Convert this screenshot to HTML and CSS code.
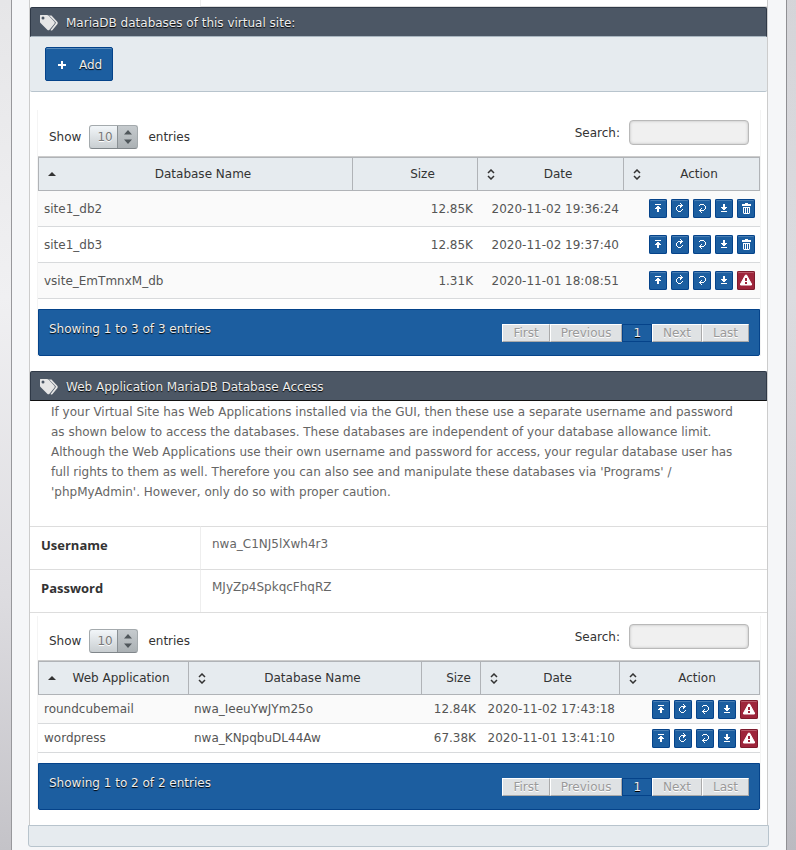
FILE: index.html
```
<!DOCTYPE html>
<html lang="en">

<head>
    <meta charset="UTF-8">
    <meta name="viewport" content="width=device-width, initial-scale=1.0">
    <title>MariaDB databases</title>
    <link rel="stylesheet" href="styles.css">
</head>

<body>
    <svg class="symbols" aria-hidden="true">
        <symbol id="tags" viewBox="0 0 18 16">
            <path d="M9 0.500h2.500l6 6.500q.5 1 0 2l-5 6q-1 1-2 0l5-6.500q.5-.7 0-1.500z" fill="#e6e6e6" />
            <path d="M.5 0h6.500q1 0 1.500.5l6 6.300q.7 1 0 2l-5 6q-1 1-2 .2L.5 8q-.5-.5-.5-1.500v-6q0-.5.5-.5z" fill="#e6e6e6" />
            <circle cx="3" cy="3" r="1.500" fill="#4c5765" />
        </symbol>
        <symbol id="top" viewBox="0 0 18 19">
            <path d="M6 5h6v1H6zM8 7h2v1h1v1h1v1h-2v3H8v-3H6V9h1V8h1z" fill="#fff" />
        </symbol>
        <symbol id="redo" viewBox="0 0 18 19">
            <path d="M9 4h1v1h1v1h1v1h-1v1h-1v1H9V7H7v1H6v3h1v1h3v-1h1v-1h1v1h-1v1h-1v1H7v-1H6v-1H5V8h1V7h1V6h3V5H9z" fill="#fff" />
        </symbol>
        <symbol id="undo" viewBox="0 0 18 19">
            <path d="M7 5h4v1h1v1h1v3h-1v1h-1v1H8v1h1v1H8v-1H7v-1H6v-1h1v-1h1V9h1v1H8v1h3v-1h1V7h-1V6H7v1H6V6h1z" fill="#fff" />
        </symbol>
        <symbol id="bottom" viewBox="0 0 18 19">
            <path d="M8 5h2v3h2v1h-1v1h-1v1H8v-1H7V9H6V8h2zM6 12h6v1H6z" fill="#fff" />
        </symbol>
        <symbol id="trash" viewBox="0 0 18 19">
            <path d="M8 4h3v1h3v2H5V5h3zM6 8h7v6l-1 1H7l-1-1zM8 9v4M9.500 9v4" fill="#fff" />
            <path d="M7.500 9v5M9.500 9v5M11.500 9v5" stroke="#1c5ea0" />
        </symbol>
        <symbol id="warn" viewBox="0 0 18 19">
            <path d="M8.500 4h1l5 9v1h-11v-1z" fill="#fff" stroke="#fff" stroke-linejoin="round" />
            <path d="M8 7h2v3H8zM8 11h2v2H8z" fill="#9e253b" />
        </symbol>
        <symbol id="both" viewBox="0 0 8 11">
            <path d="M1 4l3-3 3 3M1 7l3 3 3-3" fill="none" stroke="#333" stroke-width="1.500" />
        </symbol>
        <symbol id="asc" viewBox="0 0 8 11">
            <path d="M0 7L4 3l4 4z" fill="#333" />
        </symbol>
        <symbol id="spin" viewBox="0 0 8 16">
            <path d="M0 5.500L4 1l4 4.500zM0 10.500L4 15l4-4.500z" fill="#50575b" />
        </symbol>
        <symbol id="plus" viewBox="0 0 8 8">
            <path d="M3 0h2v3h3v2H5v3H3V5H0V3h3z" fill="#fff" />
        </symbol>
    </svg>

    <div class="page">
        <div class="panel">
            <div class="prev-row"></div>

            <h2><svg><use href="#tags" /></svg>MariaDB databases of this virtual site:</h2>
            <div class="toolbar">
                <button class="add"><svg><use href="#plus" /></svg>Add</button>
            </div>

            <div class="datatable first">
                <div class="controls">
                    <div class="length">
                        <label for="len1">Show</label>
                        <span class="select">
                            <select id="len1"><option>10</option><option>25</option></select>
                            <svg><use href="#spin" /></svg>
                        </span>
                        entries
                    </div>
                    <div class="search">
                        <label for="search1">Search:</label>
                        <input type="text" id="search1">
                    </div>
                </div>
                <table>
                    <colgroup>
                        <col>
                        <col class="w125">
                        <col class="w146">
                        <col class="w136">
                    </colgroup>
                    <thead>
                        <tr>
                            <th><svg><use href="#asc" /></svg>Database Name</th>
                            <th>Size</th>
                            <th><svg><use href="#both" /></svg>Date</th>
                            <th><svg><use href="#both" /></svg>Action</th>
                        </tr>
                    </thead>
                    <tbody>
                        <tr>
                            <td>site1_db2</td>
                            <td class="num">12.85K</td>
                            <td class="num">2020-11-02 19:36:24</td>
                            <td class="actions">
                                <div>
                                    <button aria-label="Upload"><svg><use href="#top" /></svg></button>
                                    <button aria-label="Refresh"><svg><use href="#redo" /></svg></button>
                                    <button aria-label="Restore"><svg><use href="#undo" /></svg></button>
                                    <button aria-label="Download"><svg><use href="#bottom" /></svg></button>
                                    <button aria-label="Delete"><svg><use href="#trash" /></svg></button>
                                </div>
                            </td>
                        </tr>
                        <tr>
                            <td>site1_db3</td>
                            <td class="num">12.85K</td>
                            <td class="num">2020-11-02 19:37:40</td>
                            <td class="actions">
                                <div>
                                    <button aria-label="Upload"><svg><use href="#top" /></svg></button>
                                    <button aria-label="Refresh"><svg><use href="#redo" /></svg></button>
                                    <button aria-label="Restore"><svg><use href="#undo" /></svg></button>
                                    <button aria-label="Download"><svg><use href="#bottom" /></svg></button>
                                    <button aria-label="Delete"><svg><use href="#trash" /></svg></button>
                                </div>
                            </td>
                        </tr>
                        <tr>
                            <td>vsite_EmTmnxM_db</td>
                            <td class="num">1.31K</td>
                            <td class="num">2020-11-01 18:08:51</td>
                            <td class="actions">
                                <div>
                                    <button aria-label="Upload"><svg><use href="#top" /></svg></button>
                                    <button aria-label="Refresh"><svg><use href="#redo" /></svg></button>
                                    <button aria-label="Restore"><svg><use href="#undo" /></svg></button>
                                    <button aria-label="Download"><svg><use href="#bottom" /></svg></button>
                                    <button class="red" aria-label="Protected"><svg><use href="#warn" /></svg></button>
                                </div>
                            </td>
                        </tr>
                    </tbody>
                </table>
                <div class="info">
                    <span>Showing 1 to 3 of 3 entries</span>
                    <div class="pager">
                        <button disabled>First</button>
                        <button disabled>Previous</button>
                        <button class="current">1</button>
                        <button disabled>Next</button>
                        <button disabled>Last</button>
                    </div>
                </div>
            </div>

            <h2 class="dark-edge"><svg><use href="#tags" /></svg>Web Application MariaDB Database Access</h2>
            <p>If your Virtual Site has Web Applications installed via the GUI, then these use a separate username and password as shown below to access the databases. These databases are independent of your database allowance limit. Although the Web Applications use their own username and password for access, your regular database user has full rights to them as well. Therefore you can also see and manipulate these databases via 'Programs' / 'phpMyAdmin'. However, only do so with proper caution.</p>

            <dl>
                <dt>Username</dt>
                <dd>nwa_C1NJ5lXwh4r3</dd>
                <dt>Password</dt>
                <dd>MJyZp4SpkqcFhqRZ</dd>
            </dl>

            <div class="datatable compact">
                <div class="controls">
                    <div class="length">
                        <label for="len2">Show</label>
                        <span class="select">
                            <select id="len2"><option>10</option><option>25</option></select>
                            <svg><use href="#spin" /></svg>
                        </span>
                        entries
                    </div>
                    <div class="search">
                        <label for="search2">Search:</label>
                        <input type="text" id="search2">
                    </div>
                </div>
                <table>
                    <colgroup>
                        <col class="w151">
                        <col>
                        <col class="w59">
                        <col class="w139">
                        <col class="w140">
                    </colgroup>
                    <thead>
                        <tr>
                            <th><svg><use href="#asc" /></svg>Web Application</th>
                            <th><svg><use href="#both" /></svg>Database Name</th>
                            <th>Size</th>
                            <th><svg><use href="#both" /></svg>Date</th>
                            <th><svg><use href="#both" /></svg>Action</th>
                        </tr>
                    </thead>
                    <tbody>
                        <tr>
                            <td>roundcubemail</td>
                            <td>nwa_IeeuYwJYm25o</td>
                            <td class="num">12.84K</td>
                            <td class="num">2020-11-02 17:43:18</td>
                            <td class="actions">
                                <div>
                                    <button aria-label="Upload"><svg><use href="#top" /></svg></button>
                                    <button aria-label="Refresh"><svg><use href="#redo" /></svg></button>
                                    <button aria-label="Restore"><svg><use href="#undo" /></svg></button>
                                    <button aria-label="Download"><svg><use href="#bottom" /></svg></button>
                                    <button class="red" aria-label="Protected"><svg><use href="#warn" /></svg></button>
                                </div>
                            </td>
                        </tr>
                        <tr>
                            <td>wordpress</td>
                            <td>nwa_KNpqbuDL44Aw</td>
                            <td class="num">67.38K</td>
                            <td class="num">2020-11-01 13:41:10</td>
                            <td class="actions">
                                <div>
                                    <button aria-label="Upload"><svg><use href="#top" /></svg></button>
                                    <button aria-label="Refresh"><svg><use href="#redo" /></svg></button>
                                    <button aria-label="Restore"><svg><use href="#undo" /></svg></button>
                                    <button aria-label="Download"><svg><use href="#bottom" /></svg></button>
                                    <button class="red" aria-label="Protected"><svg><use href="#warn" /></svg></button>
                                </div>
                            </td>
                        </tr>
                    </tbody>
                </table>
                <div class="info">
                    <span>Showing 1 to 2 of 2 entries</span>
                    <div class="pager">
                        <button disabled>First</button>
                        <button disabled>Previous</button>
                        <button class="current">1</button>
                        <button disabled>Next</button>
                        <button disabled>Last</button>
                    </div>
                </div>
            </div>
        </div>
        <div class="panel-footer"></div>
    </div>
</body>

</html>
```
FILE: styles.css
```
* {
    box-sizing: border-box;
}

body {
    margin: 0;
    padding: 0 9px 0 11px;
    background: linear-gradient(90deg, transparent 50%, rgba(160, 160, 170, 0.25) 50%), linear-gradient(#e6e6e8, #f0f0f2 35%, #dddce0 70%, #c4c3c8);
    font: 12px/20px "DejaVu Sans", sans-serif;
    color: #333;
}

button,
input,
select {
    font: inherit;
}

.symbols {
    display: none;
}

.page {
    min-height: 100vh;
    padding: 0 17px 3px 16px;
    border-left: 1px solid #98989c;
    border-right: 1px solid #909094;
    background: #f5f6f8;
}

.panel {
    margin: 0 1px;
    padding-bottom: 15px;
    border: 1px solid #ccc;
    border-width: 0 1px;
    background: white;
}

.prev-row {
    height: 7px;
    margin-left: 170px;
    border-left: 1px solid #eee;
    border-bottom: 1px solid #ddd;
}

h2 {
    display: flex;
    align-items: center;
    height: 30px;
    margin: 0;
    padding: 1px 9px 0;
    border: 1px solid #2f3947;
    border-bottom-color: #a9b6c0;
    border-radius: 2px 2px 0 0;
    background: #4c5765;
    color: #eee;
    font-size: 12px;
    font-weight: normal;
    text-shadow: 0 1px 1px #000;
}

h2.dark-edge {
    border-bottom-color: #111;
}

h2 svg {
    width: 18px;
    height: 16px;
    margin-right: 8px;
}

.toolbar {
    height: 55px;
    padding: 10px 15px;
    border-bottom: 1px solid #b8c4cd;
    border-radius: 0 0 2px 2px;
    background: #e6ebef;
}

.add {
    display: flex;
    align-items: center;
    gap: 13px;
    height: 34px;
    padding: 1px 10px 0 12px;
    border: 1px solid #05438a;
    border-radius: 2px;
    background: #1c5ea0;
    box-shadow: inset 0 1px #5a8cbc;
    color: #eee;
    text-shadow: 0 1px 1px #000;
}

.add svg {
    width: 8px;
    height: 8px;
}

.datatable {
    margin: 3px 6px 0 7px;
    border: 1px solid #f4f4f4;
    border-width: 0 1px;
}

.datatable.first {
    margin-top: 18px;
    margin-bottom: 15px;
}

.controls {
    display: flex;
    justify-content: space-between;
    height: 46px;
    padding: 10px 11px 0;
}

.compact .controls {
    height: 44px;
    padding-top: 8px;
}

.length {
    display: flex;
    align-items: center;
    height: 34px;
}

.select {
    position: relative;
    margin: 0 10px 0 8px;
}

.select select {
    display: block;
    appearance: none;
    width: 49px;
    height: 24px;
    padding: 0 7px;
    border: 1px solid #a4aaad;
    border-bottom-color: #80868a;
    border-radius: 3px;
    background: linear-gradient(90deg, transparent 27px, #8b9195 27px, #8b9195 28px, rgba(115, 122, 126, 0.35) 28px), linear-gradient(#f2f6f9, #c9ced1);
    color: #777;
    text-shadow: 0 1px #fff;
}

.select svg {
    position: absolute;
    top: 4px;
    right: 6px;
    width: 8px;
    height: 16px;
    pointer-events: none;
}

.search {
    display: flex;
    align-items: center;
    gap: 9px;
    height: 25px;
}

.search input {
    width: 120px;
    height: 25px;
    border: 1px solid #b9b9b9;
    border-radius: 4px;
    background: #f0f0f0;
    box-shadow: inset 0 0 3px #bbb;
}

table {
    width: 100%;
    table-layout: fixed;
    border-collapse: separate;
    border-spacing: 0;
    border-top: 1px solid #ccc;
}

.w59 { width: 59px; }
.w125 { width: 125px; }
.w136 { width: 136px; }
.w139 { width: 139px; }
.w140 { width: 140px; }
.w146 { width: 146px; }
.w151 { width: 151px; }

th {
    position: relative;
    height: 34px;
    padding: 0 5px 0 20px;
    border: 1px solid #b0b3b7;
    border-left: 0;
    background: #e6ebef;
    font-weight: normal;
    text-align: center;
}

th:first-child {
    border-left: 1px solid #b0b3b7;
}

th svg {
    position: absolute;
    top: 11px;
    left: 9px;
    width: 8px;
    height: 11px;
}

td {
    height: 36px;
    padding: 0 5px;
    border-bottom: 1px solid #d8dadc;
    color: #555;
}

td:first-child {
    padding-left: 6px;
}

.compact td {
    height: 29px;
}

tbody tr:nth-child(odd) {
    background: #fafafa;
}

.num {
    text-align: right;
}

.actions div {
    display: flex;
    justify-content: flex-end;
    gap: 4px;
}

.compact .actions {
    padding-right: 2px;
}

.actions button {
    width: 18px;
    height: 19px;
    padding: 0;
    border: 0;
    border-radius: 2px;
    background: #1c5ea0;
    box-shadow: inset 0 0 0 1px #05438a, inset 0 2px #4a7fb4;
}

.actions button.red {
    background: #9e253b;
    box-shadow: inset 0 0 0 1px #7c1a2c, inset 0 2px #b95a6a;
}

.actions svg {
    display: block;
    width: 18px;
    height: 19px;
}

.info {
    display: flex;
    justify-content: space-between;
    align-items: flex-start;
    height: 47px;
    margin-top: 10px;
    padding: 9px 10px;
    border: 1px solid #05438a;
    border-radius: 0 0 2px 2px;
    background: #1c5ea0;
    color: #eee;
    text-shadow: 0 1px 1px #000;
}

.pager {
    display: flex;
    margin-top: 5px;
}

.pager button {
    height: 18px;
    padding: 0 10px;
    border: 1px solid #fff;
    border-right-color: #aaa;
    border-bottom-color: #aaa;
    background: #dfe2e4;
    color: #999;
    line-height: 16px;
    text-shadow: 0 1px #fff;
}

.pager button.current {
    border-color: #05438a;
    background: #1c5ea0;
    color: #eee;
    text-shadow: 0 1px #000;
}

p {
    margin: 0;
    padding: 1px 21px 24px;
    color: #666;
}

dl {
    display: grid;
    grid-template-columns: 170px 1fr;
    margin: 0;
    border-bottom: 1px solid #ddd;
}

dt,
dd {
    height: 43px;
    margin: 0;
    border-top: 1px solid #ddd;
}

dt {
    padding: 8px 11px;
    font-family: "Open Sans", sans-serif;
    font-size: 13px;
    font-weight: bold;
}

dd {
    padding: 7px 11px;
    border-left: 1px solid #eee;
    color: #666;
}

.panel-footer {
    height: 22px;
    border: 1px solid #b8c4cd;
    border-radius: 0 0 3px 3px;
    background: #e6ebef;
}
```
